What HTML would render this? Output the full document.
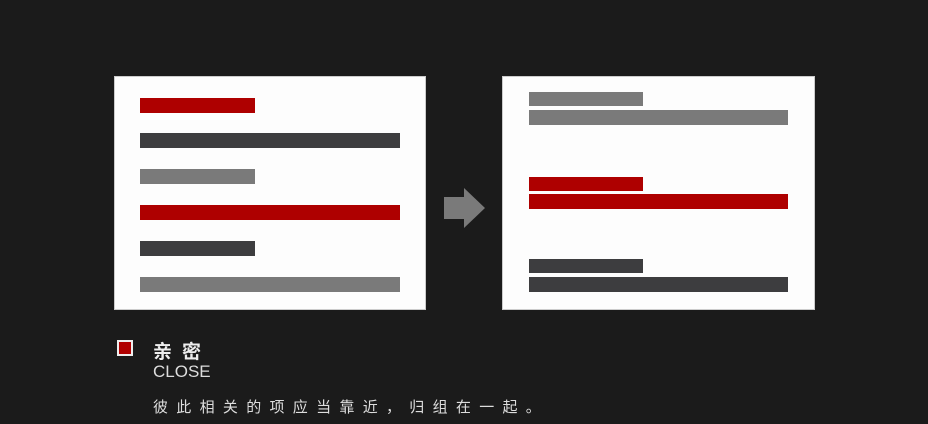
<!DOCTYPE html>
<html><head><meta charset="utf-8"><style>
body{margin:0;width:928px;height:424px;background:#1b1b1b;position:relative;overflow:hidden;font-family:"Liberation Sans","Noto Sans CJK SC",sans-serif}
.p{position:absolute;background:#fdfdfd;border:1px solid #ccc;box-sizing:border-box}
.b{position:absolute;height:15px}
.r{background:#ae0000}.d{background:#3d3d3f}.g{background:#7a7a7a}
.t{position:absolute;color:#e6e6e6;white-space:nowrap}
</style></head><body>
<div class="p" style="left:114px;top:76px;width:312px;height:234px"></div>
<div class="b r" style="left:140px;top:98px;width:115px"></div>
<div class="b d" style="left:140px;top:133px;width:260px"></div>
<div class="b g" style="left:140px;top:169px;width:115px"></div>
<div class="b r" style="left:140px;top:205px;width:260px"></div>
<div class="b d" style="left:140px;top:241px;width:115px"></div>
<div class="b g" style="left:140px;top:277px;width:260px"></div>

<svg style="position:absolute;left:0;top:0" width="928" height="424"><polygon points="444,197 464,197 464,188 485,208 464,228 464,219 444,219" fill="#7a7a7a"/></svg>

<div class="p" style="left:502px;top:76px;width:313px;height:234px"></div>
<div class="b g" style="left:529px;top:92px;width:114px;height:14px"></div>
<div class="b g" style="left:529px;top:110px;width:259px"></div>
<div class="b r" style="left:529px;top:177px;width:114px;height:14px"></div>
<div class="b r" style="left:529px;top:194px;width:259px"></div>
<div class="b d" style="left:529px;top:259px;width:114px;height:14px"></div>
<div class="b d" style="left:529px;top:277px;width:259px"></div>

<div style="position:absolute;left:117px;top:340px;width:12px;height:12px;background:#b00000;border:2px solid #eee"></div>
<div class="t" style="left:153px;top:337px;font-size:19px;font-weight:bold;letter-spacing:10px;color:#eee">亲密</div>
<div class="t" style="left:153px;top:362px;font-size:17px;color:#ddd">CLOSE</div>
<div class="t" style="left:153px;top:396px;font-size:15px;letter-spacing:8.3px;color:#ddd">彼此相关的项应当靠近，归组在一起。</div>
</body></html>
